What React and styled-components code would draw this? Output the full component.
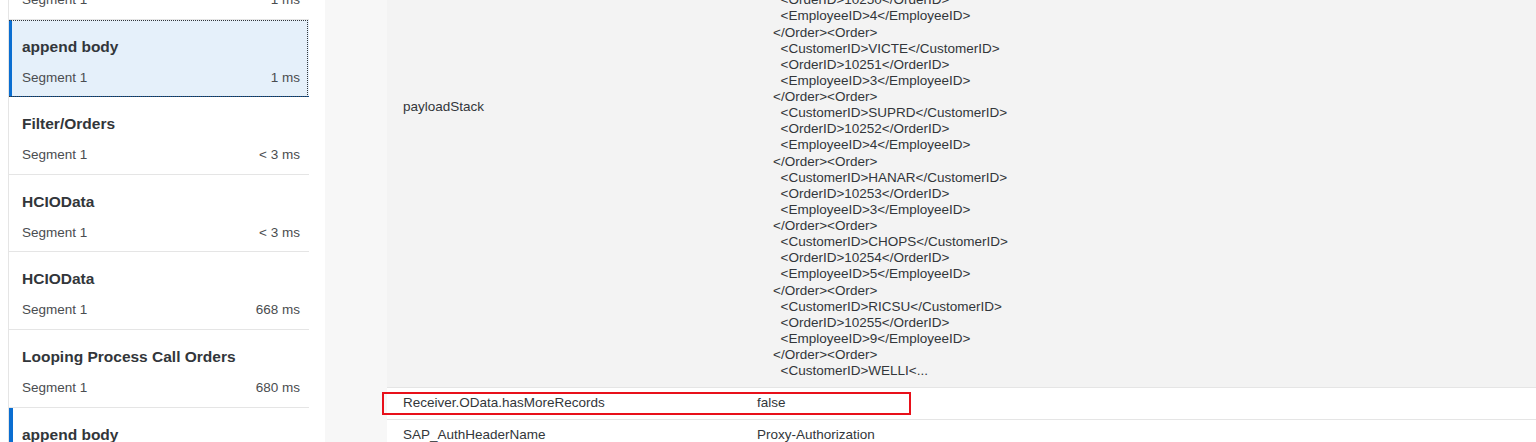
import React from 'react'
import styled, { createGlobalStyle } from 'styled-components'

const GlobalStyle = createGlobalStyle`
  html, body {
    margin: 0;
    padding: 0;
    background: #ffffff;
  }
  body {
    font-family: 'Liberation Sans', Arial, sans-serif;
    color: #32363a;
  }
`

const Page = styled.div`
  display: flex;
  height: 442px;
  overflow: hidden;
  background: #ffffff;
`

const Sidebar = styled.div`
  width: 300px;
  margin-left: 8px;
  border-left: 1px solid #e5e5e5;
  overflow: hidden;
  flex-shrink: 0;
`

const List = styled.ul`
  list-style: none;
  margin: -58px 0 0 0;
  padding: 0;
`

const Item = styled.li`
  position: relative;
  padding: 16px 9px 10px 13px;
  border-bottom: 1px solid ${p => (p.$selected ? '#0854a0' : '#e5e5e5')};
  background: ${p => (p.$selected ? '#e5f0fa' : '#ffffff')};
  height: 50.6px;
  &::before {
    content: '';
    display: ${p => (p.$marked || p.$selected ? 'block' : 'none')};
    position: absolute;
    left: ${p => (p.$selected ? '0' : '-1px')};
    top: 0;
    bottom: ${p => (p.$selected ? '0' : '-1px')};
    width: ${p => (p.$selected ? '3px' : '5px')};
    background: #0a6ed1;
  }
  &::after {
    content: '';
    display: ${p => (p.$selected ? 'block' : 'none')};
    position: absolute;
    inset: 0 1px -1px -1px;
    border: 1px dotted #32363a;
    pointer-events: none;
  }
`

const Title = styled.div`
  font-size: 15.5px;
  line-height: 21px;
  font-weight: bold;
  color: #32363a;
  margin-bottom: 13px;
  white-space: nowrap;
`

const Meta = styled.div`
  display: flex;
  justify-content: space-between;
  font-size: 13.5px;
  line-height: 16px;
  color: #4a4d50;
`

const Gap = styled.div`
  width: 16px;
  flex-shrink: 0;
`

const Detail = styled.div`
  flex: 1;
  background: #f7f7f7;
  padding-left: 62px;
  overflow: hidden;
`

const Table = styled.div`
  margin-top: -173px;
`

const Row = styled.div`
  position: relative;
  display: grid;
  grid-template-columns: 354px 1fr;
  align-items: center;
  min-height: 31px;
  background: ${p => (p.$shaded ? '#f3f3f3' : '#ffffff')};
  border-bottom: 1px solid #e5e5e5;
  font-size: 13.5px;
  color: #32363a;
`

const Cell = styled.div`
  padding: 0 16px;
  line-height: 16px;
  margin-top: -1px;
`

const Value = styled.pre`
  margin: 0;
  padding: 4px 16px 8px 32px;
  font-family: inherit;
  font-size: 13.5px;
  line-height: 16.13px;
  white-space: pre;
`

const Annotation = styled.div`
  position: absolute;
  left: -5px;
  top: 4px;
  width: 525px;
  height: 19px;
  border: 2px solid #e8101a;
  pointer-events: none;
`

const steps = [
  { title: 'HCIOData', time: '1 ms' },
  { title: 'append body', time: '1 ms', selected: true },
  { title: 'Filter/Orders', time: '< 3 ms' },
  { title: 'HCIOData', time: '< 3 ms' },
  { title: 'HCIOData', time: '668 ms' },
  { title: 'Looping Process Call Orders', time: '680 ms' },
  { title: 'append body', time: '1 ms', marked: true }
]

const orders = [
  ['VINET', '10248', '5'],
  ['TOMSP', '10249', '6'],
  ['HANAR', '10250', '4'],
  ['VICTE', '10251', '3'],
  ['SUPRD', '10252', '4'],
  ['HANAR', '10253', '3'],
  ['CHOPS', '10254', '5'],
  ['RICSU', '10255', '9']
]

const payload =
  '<Orders><Order>\n' +
  orders
    .map(
      ([c, o, e]) =>
        `  <CustomerID>${c}</CustomerID>\n  <OrderID>${o}</OrderID>\n  <EmployeeID>${e}</EmployeeID>\n`
    )
    .join('</Order><Order>\n') +
  '</Order><Order>\n  <CustomerID>WELLI<...'

export default function App () {
  return (
    <>
      <GlobalStyle />
      <Page>
        <Sidebar>
          <List>
            {steps.map((s, i) => (
              <Item key={i} $selected={s.selected} $marked={s.marked}>
                <Title>{s.title}</Title>
                <Meta>
                  <span>Segment 1</span>
                  <span>{s.time}</span>
                </Meta>
              </Item>
            ))}
          </List>
        </Sidebar>
        <Gap />
        <Detail>
          <Table>
            <Row $shaded>
              <Cell>payloadStack</Cell>
              <Value>{payload}</Value>
            </Row>
            <Row>
              <Cell>Receiver.OData.hasMoreRecords</Cell>
              <Cell>false</Cell>
              <Annotation />
            </Row>
            <Row>
              <Cell>SAP_AuthHeaderName</Cell>
              <Cell>Proxy-Authorization</Cell>
            </Row>
          </Table>
        </Detail>
      </Page>
    </>
  )
}
